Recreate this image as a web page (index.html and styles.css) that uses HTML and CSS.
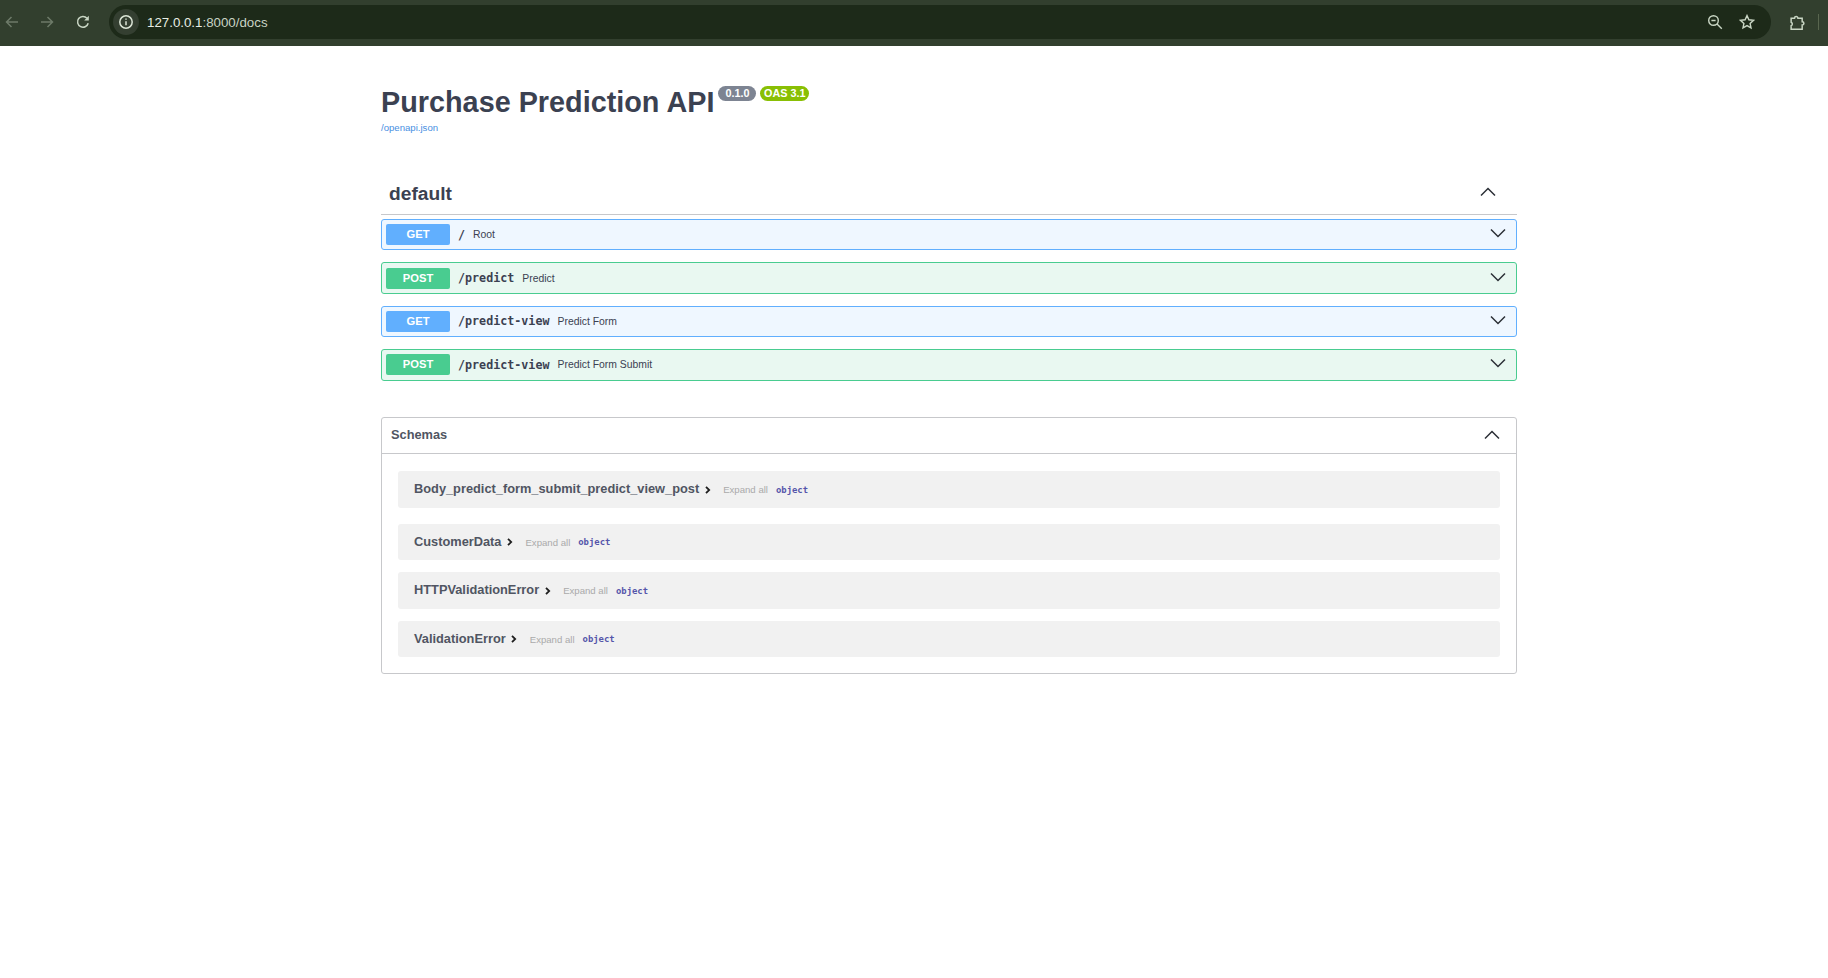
FILE: index.html
```html
<!DOCTYPE html>
<html>
<head>
	<meta charset="utf-8">
	<title>Purchase Prediction API - Swagger UI</title>
	<link rel="stylesheet" href="styles.css">
</head>
<body>
	<!-- browser toolbar -->
	<div class="toolbar">
		<svg class="nav-icon dim" viewBox="0 0 16 16"><path d="M14 8H2.5M7.5 3 2.5 8l5 5"/></svg>
		<svg class="nav-icon dim forward" viewBox="0 0 16 16"><path d="M2 8h11.5M8.5 3l5 5-5 5"/></svg>
		<svg class="nav-icon reload" viewBox="0 0 16 16"><path d="M13.2 9.2A5.4 5.4 0 1 1 12 4.2"/><path class="solid" d="M13.8 1.8v4.6H9.2z"/></svg>
		<div class="address">
			<div class="site-info">
				<svg class="info-icon" viewBox="0 0 16 16"><circle cx="8" cy="8" r="6.2"/><path d="M8 7.2v4M8 4.4v1.3"/></svg>
			</div>
			<span class="url"><span class="host">127.0.0.1</span>:8000/docs</span>
			<svg class="addr-icon zoom-icon" viewBox="0 0 16 16"><circle cx="6.5" cy="6.5" r="4.8"/><path d="M4.4 6.5h4.2M10 10l4.8 4.8"/></svg>
			<svg class="addr-icon" viewBox="0 0 16 16"><path d="M8 1.6l1.9 4.2 4.6.5-3.4 3.1.9 4.5L8 11.6l-4 2.3.9-4.5-3.4-3.1 4.6-.5z"/></svg>
		</div>
		<svg class="ext-icon" viewBox="0 0 16 16"><path d="M2 4h3.2a1.6 1.6 0 0 1 3.2 0h4v3.2a1.6 1.6 0 0 1 0 3.2v4H2v-3.4a1.7 1.7 0 0 0 0-3.2z"/></svg>
		<div class="toolbar-sep"></div>
	</div>

	<div class="wrapper">
		<div class="info">
			<div class="title-row">
				<h1 class="title">Purchase Prediction API</h1>
				<span class="badge version">0.1.0</span>
				<span class="badge oas">OAS 3.1</span>
			</div>
			<a class="spec-link" href="##">/openapi.json</a>
		</div>

		<div class="tag-head">
			<h3 class="tag-name">default</h3>
			<svg class="chevron" viewBox="0 0 16 16"><path d="M1 11.5l7-7 7 7"/></svg>
		</div>

		<div class="opblock get">
			<span class="method">GET</span>
			<span class="path">/</span>
			<span class="summary">Root</span>
			<svg class="chevron" viewBox="0 0 16 16"><path d="M1 4.5l7 7 7-7"/></svg>
		</div>
		<div class="opblock post">
			<span class="method">POST</span>
			<span class="path">/predict</span>
			<span class="summary">Predict</span>
			<svg class="chevron" viewBox="0 0 16 16"><path d="M1 4.5l7 7 7-7"/></svg>
		</div>
		<div class="opblock get">
			<span class="method">GET</span>
			<span class="path">/predict-view</span>
			<span class="summary">Predict Form</span>
			<svg class="chevron" viewBox="0 0 16 16"><path d="M1 4.5l7 7 7-7"/></svg>
		</div>
		<div class="opblock post">
			<span class="method">POST</span>
			<span class="path">/predict-view</span>
			<span class="summary">Predict Form Submit</span>
			<svg class="chevron" viewBox="0 0 16 16"><path d="M1 4.5l7 7 7-7"/></svg>
		</div>

		<div class="schemas">
			<div class="schemas-head">
				<h4 class="schemas-title">Schemas</h4>
				<svg class="chevron" viewBox="0 0 16 16"><path d="M1 11.5l7-7 7 7"/></svg>
			</div>
			<div class="schemas-body">
				<div class="model first">
					<span class="model-name">Body_predict_form_submit_predict_view_post</span>
					<svg class="model-arrow" viewBox="0 0 6 8"><path d="M1 .8 4.2 4 1 7.2"/></svg>
					<span class="expand">Expand all</span>
					<span class="type">object</span>
				</div>
				<div class="model">
					<span class="model-name">CustomerData</span>
					<svg class="model-arrow" viewBox="0 0 6 8"><path d="M1 .8 4.2 4 1 7.2"/></svg>
					<span class="expand">Expand all</span>
					<span class="type">object</span>
				</div>
				<div class="model">
					<span class="model-name">HTTPValidationError</span>
					<svg class="model-arrow" viewBox="0 0 6 8"><path d="M1 .8 4.2 4 1 7.2"/></svg>
					<span class="expand">Expand all</span>
					<span class="type">object</span>
				</div>
				<div class="model">
					<span class="model-name">ValidationError</span>
					<svg class="model-arrow" viewBox="0 0 6 8"><path d="M1 .8 4.2 4 1 7.2"/></svg>
					<span class="expand">Expand all</span>
					<span class="type">object</span>
				</div>
			</div>
		</div>
	</div>
</body>
</html>
```

FILE: styles.css
```css
* { margin: 0; padding: 0; box-sizing: border-box; }
body { background: #fff; font-family: "Liberation Sans", Arial, sans-serif; color: #3b4151; }

/* browser toolbar */
.toolbar { display: flex; align-items: center; height: 46px; background: #323f2e; padding-bottom: 2px; }
.toolbar svg { fill: none; flex: none; }
.nav-icon { width: 16px; height: 16px; stroke: #c9d6c4; stroke-width: 1.5; margin-left: 4px; }
.nav-icon.dim { stroke: #6d7a68; }
.nav-icon.forward { margin-left: 19px; }
.nav-icon.reload { margin-left: 20px; }
.nav-icon .solid { fill: #c9d6c4; stroke: none; }
.address { display: flex; align-items: center; width: 1662px; height: 34px; margin-left: 18px; background: #1d2a19; border-radius: 17px; padding: 0 16px 0 4px; }
.site-info { display: flex; align-items: center; justify-content: center; width: 26px; height: 26px; background: #343f31; border-radius: 50%; }
.info-icon { width: 16px; height: 16px; stroke: #dbe5d6; stroke-width: 1.5; }
.url { margin-left: 8px; font-size: 13.3px; color: #c9d3c4; flex: 1; }
.host { color: #e8eee4; }
.addr-icon { width: 16px; height: 16px; stroke: #c9d6c4; stroke-width: 1.4; }
.zoom-icon { margin-right: 16px; }
.ext-icon { width: 17px; height: 17px; stroke: #c9d6c4; stroke-width: 1.4; margin-left: 18px; }
.toolbar-sep { width: 1px; height: 16px; background: #59664f; margin-left: 12px; }

/* swagger page */
.wrapper { width: 1136px; margin-left: 381px; }
.info { padding-top: 39px; }
.title-row { display: flex; align-items: flex-start; }
.title { font-size: 28.8px; line-height: 34px; font-weight: bold; }
.badge { height: 15px; margin-top: 1px; border-radius: 8px; padding: 0 7px; font-size: 10.8px; line-height: 15px; font-weight: bold; color: #fff; }
.version { background: #7d8492; margin-left: 4px; }
.oas { background: #89bf04; margin-left: 4px; padding: 0 3.6px; }
.spec-link { display: block; margin-top: 3px; font-size: 9.6px; line-height: 12px; color: #4990e2; text-decoration: none; }

.tag-head { display: flex; align-items: center; justify-content: space-between; height: 34px; margin-top: 42px; padding: 0 21px 0 8px; border-bottom: 1px solid #c7c8cb; box-sizing: content-box; padding-bottom: 4px; }
.tag-name { font-size: 19.2px; font-weight: bold; margin-top: 2px; }
.chevron { width: 16px; height: 16px; fill: none; stroke: #2b2f36; stroke-width: 1.5; flex: none; margin-bottom: 2px; }

.opblock { display: flex; align-items: center; height: 31.4px; margin-bottom: 12px; padding: 0 10px 0 4px; border: 1px solid; border-radius: 3px; }
.opblock .chevron { margin-left: auto; margin-bottom: 3px; }
.opblock.get { background: #eff7ff; border-color: #61affe; }
.opblock.post { background: #e9f8f1; border-color: #49cc90; }
.tag-head + .opblock { margin-top: 4px; }
.method { width: 64px; height: 21px; border-radius: 2px; font-size: 11.2px; line-height: 21px; font-weight: bold; color: #fff; text-align: center; }
.get .method { background: #61affe; }
.post .method { background: #49cc90; }
.path { margin-left: 8px; font-family: "DejaVu Sans Mono", "Liberation Mono", monospace; font-size: 11.7px; font-weight: bold; }
.summary { margin-left: 8px; font-size: 10.4px; }

.schemas { margin-top: 36.8px; border: 1px solid #c7c8cb; border-radius: 3px; padding-bottom: 15.5px; }
.schemas-head { display: flex; align-items: center; justify-content: space-between; height: 36px; padding: 0 16px 0 9px; border-bottom: 1px solid #c7c8cb; }
.schemas-title { font-size: 12.8px; font-weight: bold; color: #505562; margin-bottom: 2px; }
.schemas-body { padding: 17px 16px 0; }
.model { display: flex; align-items: center; height: 36.5px; margin-bottom: 12px; padding-left: 16px; background: #f1f1f1; border-radius: 3px; }
.model:last-child { margin-bottom: 0; }
.model.first { margin-bottom: 16px; }
.model-name { font-size: 12.8px; font-weight: bold; color: #505562; margin-bottom: 2px; }
.model-arrow { width: 6px; height: 8px; margin-left: 5.5px; fill: none; stroke: #1f1f1f; stroke-width: 1.8; flex: none; }
.expand { margin-left: 12.5px; font-size: 9.6px; color: #aaa; }
.type { margin-left: 8px; font-family: "DejaVu Sans Mono", "Liberation Mono", monospace; font-size: 8.9px; font-weight: bold; color: #55a; }
```
